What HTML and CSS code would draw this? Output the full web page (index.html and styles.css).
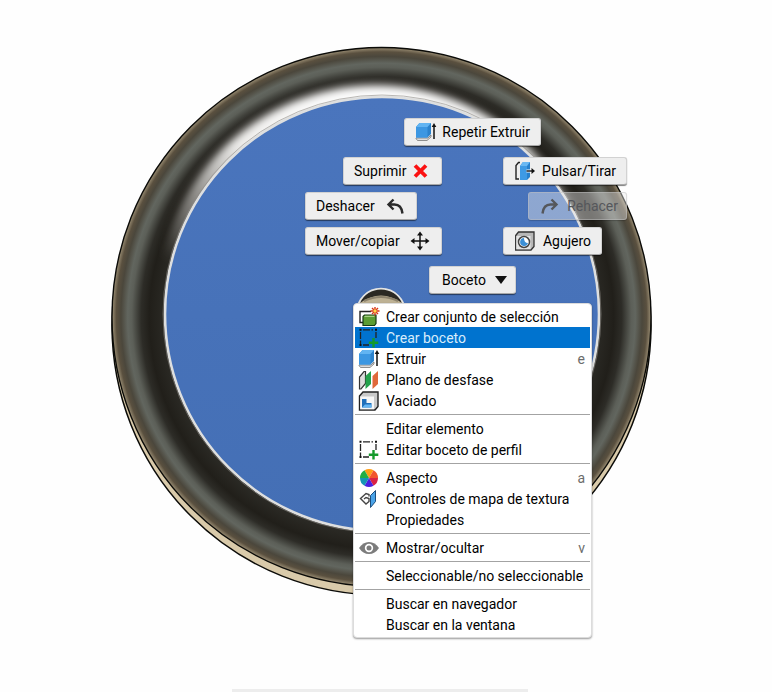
FILE: index.html
```html
<!DOCTYPE html>
<html lang="es">
<head>
  <meta charset="utf-8" />
  <meta name="viewport" content="width=device-width, initial-scale=1.0">
  <title>Boceto</title>
  <link rel="stylesheet" href="styles.css">
</head>
<body>
  <!-- ICONOS COMPARTIDOS -->
  <svg class="sprite" aria-hidden="true">
    <symbol id="icon-extrude" viewBox="0 0 22 20">
      <path d="M1 16.500l1.500 2h9.500l4-3.500v-2l-3 3H1z" fill="#dcdcdc" stroke="#777" stroke-width=".8"/>
      <path d="M1 5L4.500 1H16v11l-3.500 3.500H1z" fill="#2b82cc"/>
      <path d="M1 5L4.500 1H16l-3.500 4z" fill="#62b4f2"/>
      <path d="M1 5h11.500v10.500H1z" fill="#3c97e2"/>
      <path d="M19 3v14" stroke="#111" stroke-width="1.500"/>
      <path d="M16.700 5L19 1l2.300 4z" fill="#111"/>
    </symbol>
    <symbol id="icon-sketch" viewBox="0 0 22 20">
      <path d="M2.500 4v12M5 1.800h10M18 4v6M5 17h6" fill="none" stroke="#222" stroke-width="1.300" stroke-dasharray="7 1.500"/>
      <path d="M1.500.8h2v2h-2zM17 .8h2v2h-2zM1.500 16h2v2h-2z" fill="#111"/>
      <path d="M15.500 10v9.500M10.800 14.800h9.500" stroke="#149a2c" stroke-width="2.400"/>
    </symbol>
  </svg>

  <main class="viewport">
    <!-- MODELO 3D -->
    <svg class="model" viewBox="0 0 772 689" role="img" aria-label="Modelo 3D">
      <defs>
        <radialGradient id="ring" gradientUnits="userSpaceOnUse" cx="381.500" cy="317" r="270">
          <stop offset=".8" stop-color="#2b2a25"/>
          <stop offset=".86" stop-color="#211f1a"/>
          <stop offset=".89" stop-color="#2d2c27"/>
          <stop offset=".925" stop-color="#5c5f58"/>
          <stop offset=".94" stop-color="#62665f"/>
          <stop offset=".965" stop-color="#4b473c"/>
          <stop offset=".982" stop-color="#5a503f"/>
          <stop offset="1" stop-color="#a3967b"/>
        </radialGradient>
        <linearGradient id="shine" gradientUnits="userSpaceOnUse" x1="0" y1="84" x2="0" y2="260">
          <stop offset="0" stop-color="#fff"/>
          <stop offset=".35" stop-color="#eeedeb"/>
          <stop offset=".65" stop-color="#8c8a86"/>
          <stop offset="1" stop-color="#8c8a86" stop-opacity="0"/>
        </linearGradient>
        <linearGradient id="face" x1="0" y1="0" x2="0" y2="1">
          <stop offset="0" stop-color="#4a75bd"/>
          <stop offset="1" stop-color="#446fb5"/>
        </linearGradient>
        <filter id="soft" x="-10%" y="-10%" width="120%" height="120%">
          <feGaussianBlur stdDeviation="4"/>
        </filter>
      </defs>
      <circle cx="381.500" cy="325.500" r="269.500" fill="#d9caaa" stroke="#0b0b08" stroke-width="1.500"/>
      <circle cx="381.500" cy="317" r="269.500" fill="url(#ring)" stroke="#0b0b08" stroke-width="1.400"/>
      <circle cx="376" cy="302" r="217" fill="url(#shine)" filter="url(#soft)"/>
      <circle cx="382" cy="314" r="217" fill="url(#face)" stroke="#dedfdf" stroke-width="2.600"/>
      <circle cx="382" cy="314" r="219" fill="none" stroke="#8d8b85" stroke-width="1" opacity=".6"/>
      <circle cx="381" cy="313" r="24" fill="#bdb194" stroke="#e4e4e2" stroke-width="2.500"/>
      <path d="M360 303a23 23 0 0 1 42 0q-21-15-42 0" fill="#2b2923"/>
      <path d="M364 301q17-8 34 0" fill="none" stroke="#8d836d" stroke-width="2"/>
    </svg>

    <!-- MENÚ RADIAL -->
    <div class="marking-menu">
      <button type="button" class="mark mark--repeat">
        <svg class="icon" viewBox="0 0 22 20"><use href="#icon-extrude"/></svg>
        <span>Repetir Extruir</span>
      </button>
      <button type="button" class="mark mark--delete">
        <span>Suprimir</span>
        <svg class="icon" viewBox="0 0 22 20"><path d="M6 4.500l11 11M17 4.500L6 15.500" stroke="#fb1111" stroke-width="3.800"/></svg>
      </button>
      <button type="button" class="mark mark--press">
        <svg class="icon" viewBox="0 0 22 20">
          <path d="M6 1.500H4.500L2 4.500V18h3" fill="#eee" stroke="#222" stroke-width="1.400"/>
          <path d="M6 5l3-4h7v15l-3 3H6z" fill="#2680cc"/>
          <path d="M6 5l3-4h7l-3 4z" fill="#69b8f3"/>
          <path d="M6 5h7v14H6z" fill="#3e9ae4"/>
          <path d="M12.500 10h6" stroke="#fff" stroke-width="3"/>
          <path d="M12.500 10h6" stroke="#111" stroke-width="1.400"/>
          <path d="M17.500 7l3.500 3-3.500 3z" fill="#111"/>
        </svg>
        <span>Pulsar/Tirar</span>
      </button>
      <button type="button" class="mark mark--undo">
        <span>Deshacer</span>
        <svg class="icon" viewBox="0 0 22 20"><path d="M9.500 3.500L4.500 8.500l5 5M5 8.500h5.500q7 0 8 9" fill="none" stroke="#2b2b2b" stroke-width="2.400"/></svg>
      </button>
      <button type="button" class="mark mark--redo" disabled>
        <svg class="icon" viewBox="0 0 22 20"><path d="M12.500 3.500l5 5-5 5M17 8.500h-5.500q-7 0-8 9" fill="none" stroke="currentColor" stroke-width="2.400"/></svg>
        <span>Rehacer</span>
      </button>
      <button type="button" class="mark mark--move">
        <span>Mover/copiar</span>
        <svg class="icon" viewBox="0 0 22 20">
          <path d="M11 3v14M4 10h14" stroke="#111" stroke-width="1.500"/>
          <path d="M11 .5l3 4H8zM11 19.500l3-4H8zM1.500 10l4-3v6zM20.500 10l-4-3v6z" fill="#111"/>
        </svg>
      </button>
      <button type="button" class="mark mark--hole">
        <svg class="icon" viewBox="0 0 22 20">
          <path d="M1.700 4.500L4.500 1H20v14.500L17 19H1.700z" fill="#b8b8b8" stroke="#333" stroke-width="1.300"/>
          <path d="M2.300 5H16.500v13.300H2.300z" fill="#e4e4e4"/>
          <circle cx="10" cy="11" r="5.500" fill="#fff" stroke="#444" stroke-width="1.500"/>
          <path d="M10 7a4 4 0 1 0 4 5q-4 0-4-5" fill="#3b8fd6"/>
        </svg>
        <span>Agujero</span>
      </button>
      <button type="button" class="mark mark--sketch">
        <span>Boceto</span>
        <svg class="arrow" viewBox="0 0 12 8"><path d="M0 0h12L6 8z" fill="#111"/></svg>
      </button>
    </div>

    <!-- MENÚ CONTEXTUAL -->
    <div class="context-menu" role="menu">
      <button type="button" role="menuitem" class="item">
        <svg class="icon" viewBox="0 0 22 20">
          <path d="M13 4.500H2v11h3" fill="none" stroke="#222" stroke-width="1.400"/>
          <path d="M5 9.500L6.500 8H18v8.500L16.500 18.500H5z" fill="#5b9c32" stroke="#173c13" stroke-width="1.200"/>
          <path d="M6 10l1-1.300h10L16 10z" fill="#a5cf85"/>
          <path d="M17-.5v9M12.500 4h9M14 1l6 6M20 1l-6 6" stroke="#d83416" stroke-width="1.400"/>
          <circle cx="17" cy="4" r="1.700" fill="#ffd84a"/>
        </svg>
        <span class="item__label">Crear conjunto de selección</span>
      </button>
      <button type="button" role="menuitem" class="item item--active">
        <svg class="icon" viewBox="0 0 22 20"><use href="#icon-sketch"/></svg>
        <span class="item__label">Crear boceto</span>
      </button>
      <button type="button" role="menuitem" class="item">
        <svg class="icon" viewBox="0 0 22 20"><use href="#icon-extrude"/></svg>
        <span class="item__label">Extruir</span>
        <span class="item__key">e</span>
      </button>
      <button type="button" role="menuitem" class="item">
        <svg class="icon" viewBox="0 0 22 20">
          <path d="M1.500 7L6 1.500h1.500v12L3 19H1.500z" fill="#ddd" stroke="#333" stroke-width="1.200"/>
          <path d="M7.500 6L13 1v13l-5.500 5z" fill="#23a24b"/>
          <path d="M14.500 6L20 1v13l-5.500 5z" fill="#e0683a"/>
        </svg>
        <span class="item__label">Plano de desfase</span>
      </button>
      <button type="button" role="menuitem" class="item">
        <svg class="icon" viewBox="0 0 22 20">
          <path d="M1.500 5L5 1h15v14.500L17 19H1.500z" fill="#c9c9c9" stroke="#222" stroke-width="1.400"/>
          <path d="M2.200 5.500H16v12.800H2.200z" fill="#f6f6f6"/>
          <path d="M4 8v8.500h9.500V12H8.500V8z" fill="#1f6fba"/>
          <path d="M4 16.500l3-3h6.500v3z" fill="#65b5f2"/>
        </svg>
        <span class="item__label">Vaciado</span>
      </button>
      <hr class="separator">
      <button type="button" role="menuitem" class="item">
        <span class="icon"></span>
        <span class="item__label">Editar elemento</span>
      </button>
      <button type="button" role="menuitem" class="item">
        <svg class="icon" viewBox="0 0 22 20"><use href="#icon-sketch"/></svg>
        <span class="item__label">Editar boceto de perfil</span>
      </button>
      <hr class="separator">
      <button type="button" role="menuitem" class="item">
        <svg class="icon" viewBox="0 0 22 20">
          <path d="M11 10L6.500 2.200A9 9 0 0 1 15.500 2.200z" fill="#ff9d16"/>
          <path d="M11 10l4.500-7.800A9 9 0 0 1 20 10z" fill="#f2552c"/>
          <path d="M11 10h9a9 9 0 0 1-4.500 7.800z" fill="#d92345"/>
          <path d="M11 10l4.500 7.800a9 9 0 0 1-9 0z" fill="#4b20e0"/>
          <path d="M11 10l-4.500 7.800A9 9 0 0 1 2 10z" fill="#1695b5"/>
          <path d="M11 10H2a9 9 0 0 1 4.500-7.800z" fill="#21ae45"/>
        </svg>
        <span class="item__label">Aspecto</span>
        <span class="item__key">a</span>
      </button>
      <button type="button" role="menuitem" class="item">
        <svg class="icon" viewBox="0 0 22 20">
          <path d="M11 7.500V5.500L8 4.500l-5.500 5L8 15l3-2.500v-3L8 8.500 6 10" fill="none" stroke="#444" stroke-width="1.400"/>
          <path d="M12.500 6.500L17.500 1.500v11l-5 6z" fill="#4aa3e8" stroke="#1c4d7c" stroke-width="1"/>
        </svg>
        <span class="item__label">Controles de mapa de textura</span>
      </button>
      <button type="button" role="menuitem" class="item">
        <span class="icon"></span>
        <span class="item__label">Propiedades</span>
      </button>
      <hr class="separator">
      <button type="button" role="menuitem" class="item">
        <svg class="icon" viewBox="0 0 22 20">
          <path d="M1 10q4-6 10-6t10 6q-4 6-10 6T1 10" fill="#7c7c7c"/>
          <circle cx="11" cy="10" r="4.200" fill="#fff"/>
          <circle cx="11" cy="10" r="2.500" fill="#7c7c7c"/>
        </svg>
        <span class="item__label">Mostrar/ocultar</span>
        <span class="item__key">v</span>
      </button>
      <hr class="separator">
      <button type="button" role="menuitem" class="item">
        <span class="icon"></span>
        <span class="item__label">Seleccionable/no seleccionable</span>
      </button>
      <hr class="separator">
      <button type="button" role="menuitem" class="item">
        <span class="icon"></span>
        <span class="item__label">Buscar en navegador</span>
      </button>
      <button type="button" role="menuitem" class="item">
        <span class="icon"></span>
        <span class="item__label">Buscar en la ventana</span>
      </button>
    </div>

    <!-- BORDE DE LA BARRA DE NAVEGACIÓN -->
    <div class="navbar"></div>
  </main>
</body>
</html>
```
FILE: styles.css
```css
/* ===================== RESET BÁSICO ===================== */
*, *::before, *::after {
  margin: 0;
  padding: 0;
  box-sizing: border-box;
}

body {
  background: #fefefe;
  color: #000;
  font-family: Roboto, "Liberation Sans", Arial, sans-serif;
  font-size: 14px;
}

button {
  border: none;
  background: none;
  color: inherit;
  font: inherit;
}

.sprite {
  position: absolute;
  width: 0;
  height: 0;
}

/* ===================== ÁREA DE TRABAJO ===================== */
.viewport {
  position: relative;
  display: flex;
  flex-direction: column;
  min-height: 100vh;
  overflow: hidden;
}
.model {
  display: block;
  width: 100%;
}
.navbar {
  width: 296px;
  height: 3px;
  margin-top: auto;
  margin-left: 30%;
  background: #ededed;
}

.icon {
  flex: none;
  width: 22px;
  height: 20px;
}

/* ===================== MENÚ RADIAL ===================== */
.marking-menu {
  position: absolute;
  top: 118px;
  left: 50%;
  width: 322px;
  height: 176px;
  margin-left: -81px;
}
.mark {
  position: absolute;
  display: flex;
  align-items: center;
  justify-content: space-between;
  height: 28px;
  padding: 0 10px;
  border: 1px solid #d2d2d2;
  border-bottom-color: #a8a8a8;
  border-radius: 3px;
  background: #eeeeee;
  box-shadow: 0 1px 1px rgba(0, 0, 0, 0.5);
  white-space: nowrap;
}
.mark--repeat { top: 0; left: 99px; width: 137px; }
.mark--delete { top: 39px; left: 38px; width: 99px; }
.mark--press { top: 39px; right: 0; width: 124px; }
.mark--undo { top: 74px; left: 0; width: 112px; }
.mark--redo { top: 74px; right: 0; width: 99px; }
.mark--move { top: 109px; left: 0; width: 137px; }
.mark--hole { top: 109px; left: 198px; width: 99px; }
.mark--sketch { top: 148px; left: 124px; width: 87px; padding: 0 8px 0 12px; }
.mark:disabled {
  padding: 0 8px 0 10px;
  border-color: rgba(190, 190, 190, 0.5);
  background: rgba(238, 238, 238, 0.42);
  box-shadow: 0 1px 1px rgba(0, 0, 0, 0.2);
  color: #55575b;
}
.arrow {
  width: 12px;
  height: 8px;
}

/* ===================== MENÚ CONTEXTUAL ===================== */
.context-menu {
  position: absolute;
  top: 303px;
  left: 50%;
  width: 239px;
  margin-left: -33px;
  padding: 2px 1px;
  border: 1px solid #dcdcdc;
  border-radius: 4px;
  background: #fff;
  box-shadow: 0 1px 2px rgba(0, 0, 0, 0.4);
}
.item {
  display: flex;
  align-items: center;
  width: 100%;
  height: 21px;
  padding: 0 5px 0 3px;
  text-align: left;
}
.item--active {
  background: #0073cf;
  color: #d9edfb;
}
.item__label {
  flex: 1;
  margin-left: 6px;
  white-space: nowrap;
}
.item__key {
  color: #6c6c6c;
}
.separator {
  height: 1px;
  margin: 3px 0;
  border: none;
  background: #a3a3a3;
}
```
